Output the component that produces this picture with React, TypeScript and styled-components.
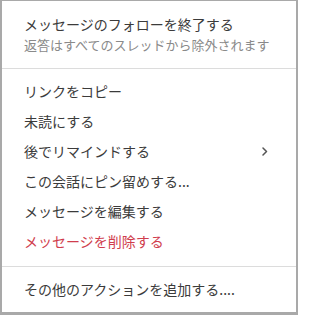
import React from "react";
import styled, { createGlobalStyle } from "styled-components";

const Global = createGlobalStyle`
  html, body { margin: 0; padding: 0; background: #ffffff; }
  body { font-family: "Noto Sans CJK JP", "Noto Sans", sans-serif; }
  * { box-sizing: border-box; }
`;

const Card = styled.div`
  width: 298px;
  height: 315px;
  background: #ffffff;
  border-style: solid;
  border-color: #a9a9a9;
  border-width: 1px 2px 3px 2px;
  display: flex;
  flex-direction: column;
`;

const Header = styled.div`
  padding: 12px 22px 13px 22px;
  display: flex;
  flex-direction: column;
`;

const Title = styled.div`
  font-size: 14px;
  line-height: 22px;
  color: #3b3b3b;
  white-space: nowrap;
`;

const Subtitle = styled.div`
  font-size: 13px;
  line-height: 20px;
  color: #8a8a8a;
  white-space: nowrap;
`;

const Divider = styled.div`
  height: 1px;
  background: #dcdcdc;
  flex: none;
`;

const Section = styled.div<{ $top: number; $bottom: number }>`
  padding: ${(p) => p.$top}px 0 ${(p) => p.$bottom}px 0;
  display: flex;
  flex-direction: column;
`;

const Item = styled.div<{ $danger?: boolean }>`
  height: 30px;
  padding: 0 28px 0 22px;
  display: flex;
  align-items: center;
  justify-content: space-between;
  font-size: 14px;
  color: ${(p) => (p.$danger ? "#d03d4d" : "#3b3b3b")};
  white-space: nowrap;
`;

const Chevron = () => (
  <svg width="6" height="9" viewBox="0 0 6 9" fill="none">
    <path d="M1 1l3.5 3.5L1 8" stroke="#555" strokeWidth="1.5" strokeLinecap="round" strokeLinejoin="round" />
  </svg>
);

export default function App() {
  return (
    <>
      <Global />
      <Card>
        <Header>
          <Title>メッセージのフォローを終了する</Title>
          <Subtitle>返答はすべてのスレッドから除外されます</Subtitle>
        </Header>
        <Divider />
        <Section $top={7} $bottom={10}>
          <Item>リンクをコピー</Item>
          <Item>未読にする</Item>
          <Item>
            <span>後でリマインドする</span>
            <Chevron />
          </Item>
          <Item>この会話にピン留めする...</Item>
          <Item>メッセージを編集する</Item>
          <Item $danger>メッセージを削除する</Item>
        </Section>
        <Divider />
        <Section $top={7} $bottom={8}>
          <Item>その他のアクションを追加する....</Item>
        </Section>
      </Card>
    </>
  );
}
